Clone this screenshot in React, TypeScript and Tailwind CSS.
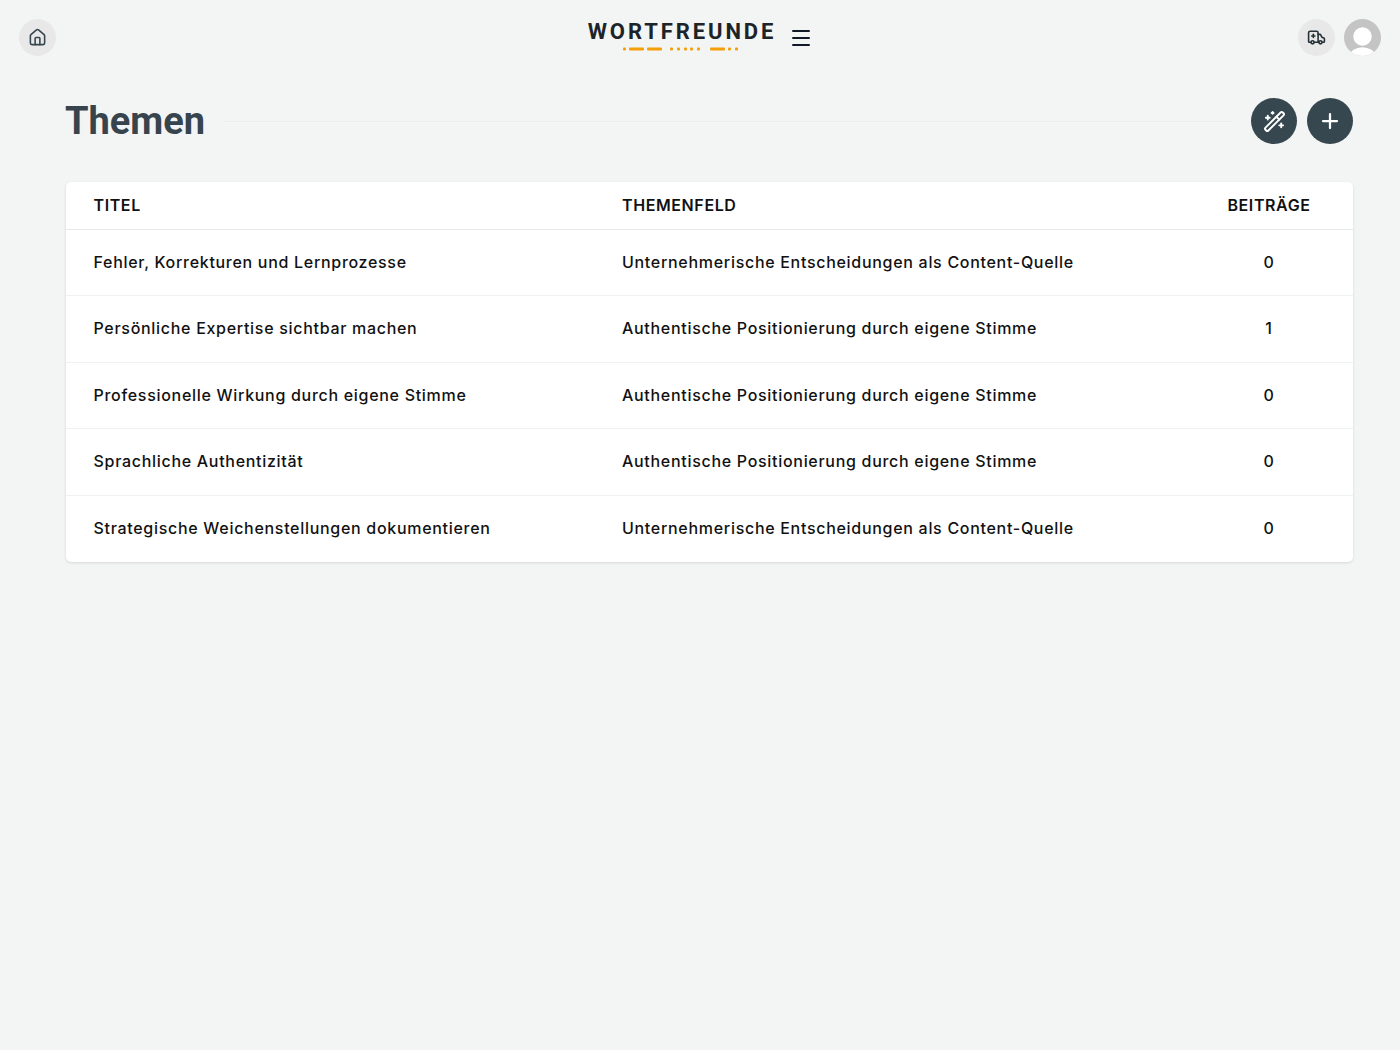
import { Ambulance, House, Menu, Plus, WandSparkles } from "lucide-react";

const rows = [
  { title: "Fehler, Korrekturen und Lernprozesse", field: "Unternehmerische Entscheidungen als Content-Quelle", count: 0 },
  { title: "Persönliche Expertise sichtbar machen", field: "Authentische Positionierung durch eigene Stimme", count: 1 },
  { title: "Professionelle Wirkung durch eigene Stimme", field: "Authentische Positionierung durch eigene Stimme", count: 0 },
  { title: "Sprachliche Authentizität", field: "Authentische Positionierung durch eigene Stimme", count: 0 },
  { title: "Strategische Weichenstellungen dokumentieren", field: "Unternehmerische Entscheidungen als Content-Quelle", count: 0 },
];

const Logo = () => (
  <div className="flex flex-col items-center w-[190px] mb-[5px]">
    <div className="font-['Roboto',sans-serif] font-bold text-[22px] leading-[26px] tracking-[2.9px] text-[#1c2429] whitespace-nowrap">
      WORTFREUNDE
    </div>
    <svg width="118" height="4" viewBox="0 0 118 4" className="mt-[2px]">
      <g fill="#f59e0b">
        <rect x="0" y="0.5" width="3" height="3" rx="1" />
        <rect x="6" y="0.5" width="15" height="3" rx="1" />
        <rect x="24" y="0.5" width="15" height="3" rx="1" />
        <rect x="47" y="0.5" width="3" height="3" rx="1" />
        <rect x="54" y="0.5" width="3" height="3" rx="1" />
        <rect x="61" y="0.5" width="3" height="3" rx="1" />
        <rect x="67" y="0.5" width="3" height="3" rx="1" />
        <rect x="74" y="0.5" width="3" height="3" rx="1" />
        <rect x="87" y="0.5" width="15" height="3" rx="1" />
        <rect x="105" y="0.5" width="3" height="3" rx="1" />
        <rect x="112" y="0.5" width="3" height="3" rx="1" />
      </g>
    </svg>
  </div>
);

const Avatar = () => (
  <div className="w-[37px] h-[37px] rounded-full bg-[#c4c4c4] overflow-hidden">
    <svg viewBox="0 0 38 38" className="w-full h-full">
      <circle cx="19" cy="18" r="9.5" fill="#ffffff" />
      <ellipse cx="19" cy="38" rx="13" ry="9" fill="#ffffff" />
    </svg>
  </div>
);

const App = () => {
  return (
    <div className="min-h-[1050px] bg-[#f3f5f4] font-['Inter',sans-serif]">
      {/* Top bar */}
      <header className="flex items-center justify-between h-[75px] px-[19px]">
        <button className="w-[37px] h-[37px] rounded-full bg-[#e8e8e8] flex items-center justify-center text-[#37474f]">
          <House size={19} strokeWidth={2} />
        </button>
        <div className="flex items-center gap-[12px] ml-[46px]">
          <Logo />
          <Menu size={24} strokeWidth={2} className="text-[#111827]" />
        </div>
        <div className="flex items-center gap-[9px]">
          <button className="w-[37px] h-[37px] rounded-full bg-[#e8e8e8] flex items-center justify-center text-[#263238]">
            <Ambulance size={19} strokeWidth={2} />
          </button>
          <Avatar />
        </div>
      </header>

      <main className="pl-[65px] pr-[47px]">
        {/* Title row */}
        <div className="flex items-center h-[46px] mt-[23px]">
          <h1 className="font-['Roboto',sans-serif] font-bold text-[38px] tracking-[0px] leading-[46px] text-[#37444d]">
            Themen
          </h1>
          <div className="flex-1 h-px bg-[#eceeed] ml-[19px] mr-[18px]" />
          <div className="flex items-center gap-[10px]">
            <button className="w-[46px] h-[46px] rounded-full bg-[#37474f] flex items-center justify-center text-white">
              <WandSparkles size={23} strokeWidth={2} />
            </button>
            <button className="w-[46px] h-[46px] rounded-full bg-[#37474f] flex items-center justify-center text-white">
              <Plus size={24} strokeWidth={2.25} />
            </button>
          </div>
        </div>

        {/* Table */}
        <div className="mt-[38px] ml-px bg-white rounded-[5px] shadow-[0_1px_3px_rgba(0,0,0,0.12)] overflow-hidden">
          <table className="w-full text-[#111111] text-[16px] font-medium tracking-[0.7px] border-collapse">
            <thead>
              <tr className="h-[47px] border-b border-[#e8e9e9]">
                <th className="w-[556px] pl-[27.5px] text-left font-semibold uppercase tracking-[0.6px]">Titel</th>
                <th className="text-left font-semibold uppercase tracking-[0.6px]">Themenfeld</th>
                <th className="w-[168px] text-center font-semibold uppercase tracking-[0.6px]">Beiträge</th>
              </tr>
            </thead>
            <tbody>
              {rows.map((row, i) => (
                <tr key={row.title} className={i < rows.length - 1 ? "h-[66.5px] border-b border-[#f0f1f1]" : "h-[66.5px]"}>
                  <td className="pl-[27.5px] pb-px">{row.title}</td>
                  <td className="pb-px">{row.field}</td>
                  <td className="text-center pb-px">{row.count}</td>
                </tr>
              ))}
            </tbody>
          </table>
        </div>
      </main>
    </div>
  );
};

export default App;
